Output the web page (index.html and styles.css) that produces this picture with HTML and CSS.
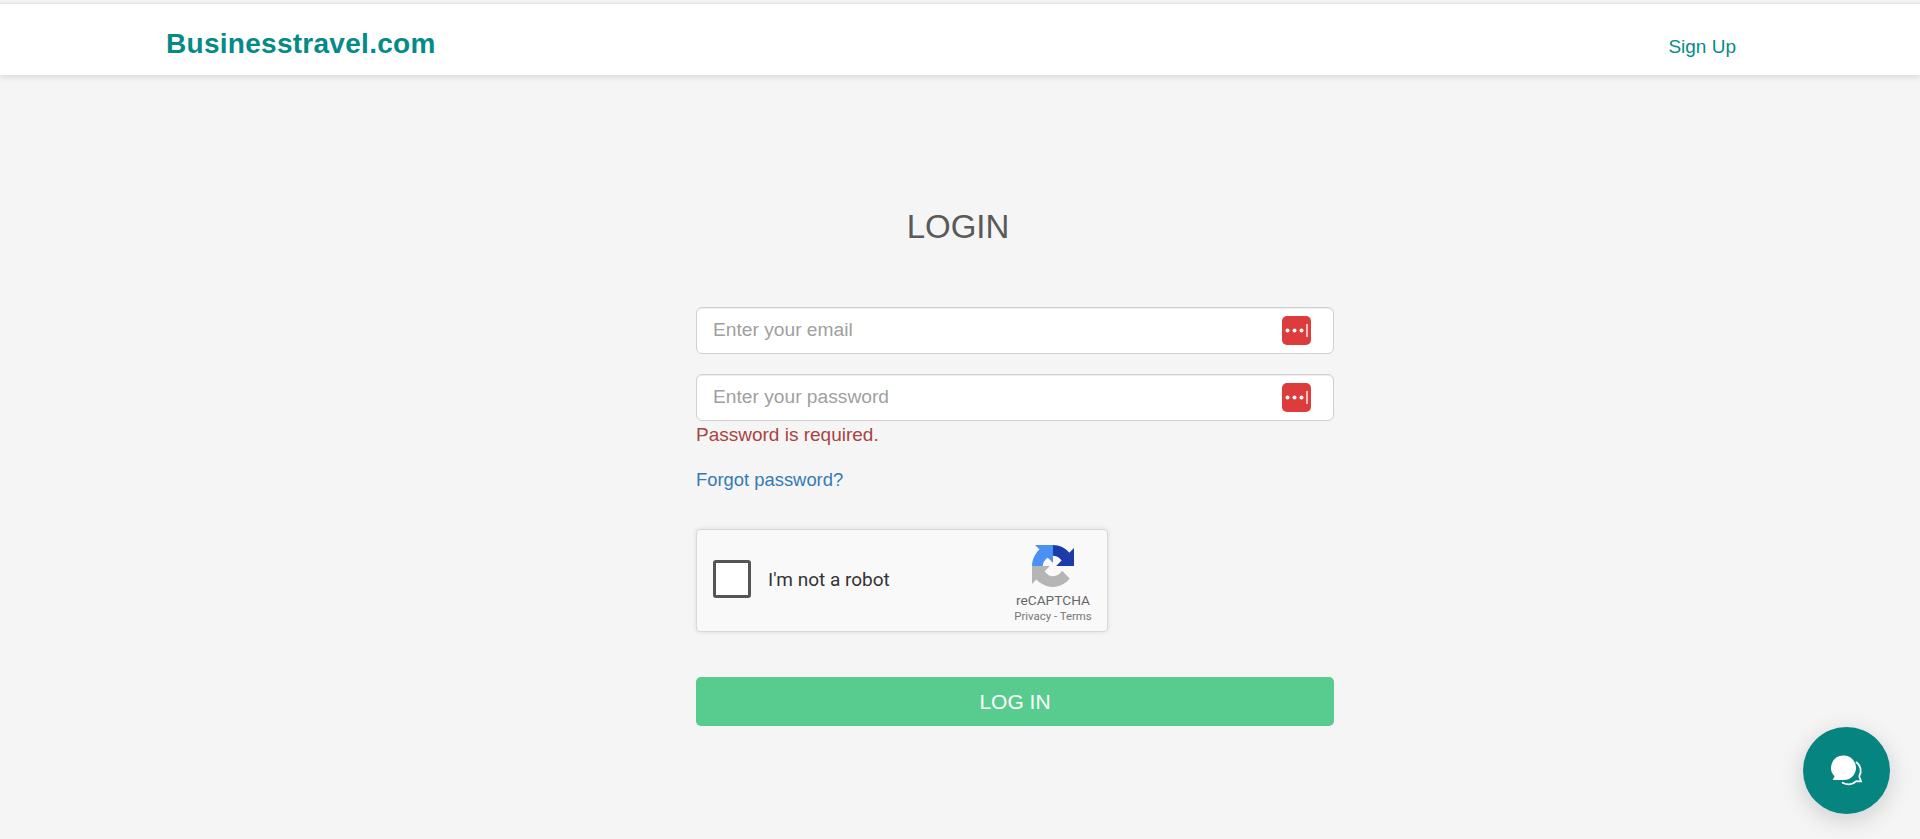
FILE: index.html
```html
<!DOCTYPE html>
<html lang="en">
<head>
<meta charset="utf-8">
<title>Login - Businesstravel.com</title>
<link rel="stylesheet" href="styles.css">
</head>
<body>
<header class="topbar">
  <a class="brand" href="#">Businesstravel.com</a>
  <a class="signup" href="#">Sign Up</a>
</header>
<main class="main">
  <h1 class="title">LOGIN</h1>
  <form class="form">
    <div class="field">
      <input class="input" type="text" placeholder="Enter your email">
      <svg class="pm" viewBox="0 0 29 29"><rect width="29" height="29" rx="5" fill="#dc3c3c"/><circle cx="5.500" cy="14.500" r="2" fill="#fff"/><circle cx="12.500" cy="14.500" r="2" fill="#fff"/><circle cx="19.500" cy="14.500" r="2" fill="#fff"/><rect x="24" y="8" width="2" height="13" fill="#f2b8b8"/></svg>
    </div>
    <div class="field field-second">
      <input class="input" type="password" placeholder="Enter your password">
      <svg class="pm" viewBox="0 0 29 29"><rect width="29" height="29" rx="5" fill="#dc3c3c"/><circle cx="5.500" cy="14.500" r="2" fill="#fff"/><circle cx="12.500" cy="14.500" r="2" fill="#fff"/><circle cx="19.500" cy="14.500" r="2" fill="#fff"/><rect x="24" y="8" width="2" height="13" fill="#f2b8b8"/></svg>
    </div>
    <div class="error">Password is required.</div>
    <a class="forgot" href="#">Forgot password?</a>
    <div class="captcha">
      <span class="check"></span>
      <span class="robot">I'm not a robot</span>
      <div class="badge">
        <svg class="rc" viewBox="0 0 64 64">
          <path d="M64 31.955l-.033-1.37V4.687l-7.16 7.16C50.948 4.674 42.033.093 32.05.093 21.663.093 12.437 5.05 6.570 12.730l11.736 11.860a15.540 15.540 0 0 1 4.753-5.334c2.050-1.600 4.952-2.906 8.990-2.906.488 0 .865.057 1.142.164 5.005.395 9.344 3.158 11.900 7.168l-8.307 8.307 26.200-.004" fill="#1c3aa9"/>
          <path d="M31.955 0l-1.370.033H4.687l7.160 7.160C4.674 13.052.093 21.967.093 31.950c0 10.387 4.957 19.613 12.637 25.480l11.860-11.736a15.540 15.540 0 0 1-5.334-4.753c-1.600-2.050-2.906-4.952-2.906-8.990 0-.488.057-.865.164-1.142.395-5.005 3.158-9.344 7.168-11.900l8.307 8.307-.004-26.200" fill="#4a90f5"/>
          <path d="M.002 32l.033 1.370v25.898l7.160-7.160C13.054 59.280 21.970 63.860 31.950 63.860c10.387 0 19.613-4.957 25.480-12.637l-11.736-11.860a15.540 15.540 0 0 1-4.753 5.334c-2.050 1.600-4.952 2.906-8.990 2.906-.488 0-.865-.057-1.142-.164-5.005-.395-9.344-3.158-11.900-7.168l8.307-8.307-26.200.004" fill="#b5b5b5"/>
        </svg>
        <div class="rc-name">reCAPTCHA</div>
        <div class="rc-links">Privacy - Terms</div>
      </div>
    </div>
    <button class="submit" type="button">LOG IN</button>
  </form>
</main>
<button class="chat" type="button" aria-label="Chat">
  <svg viewBox="0 0 32 32" width="34" height="34">
    <path d="M13 1.500a11.500 11.500 0 0 1 0 23H2.500l1.800-3.500A11.500 11.500 0 0 1 13 1.500z" fill="#fff"/>
    <path d="M24.500 7.500A10 10 0 0 1 27.500 21l1.700 4.700-4.500-.200a11 11 0 0 1-10.500 2.500l-3-1.200" fill="none" stroke="#fff" stroke-width="1.600"/>
  </svg>
</button>
</body>
</html>
```
FILE: styles.css
```css
* { box-sizing: border-box; }
html, body { height: 100%; }
body {
  margin: 0;
  padding-top: 3px;
  background: #f5f5f5;
  font-family: "Liberation Sans", Arial, sans-serif;
  overflow: hidden;
}
.topbar {
  height: 72px;
  padding: 8px 184px 0 166px;
  background: #fff;
  border-top: 1px solid #e2e2e2;
  display: flex;
  align-items: center;
  justify-content: space-between;
  box-shadow: 0 2px 6px rgba(0,0,0,.12);
}
.brand {
  font-size: 28px;
  font-weight: 700;
  letter-spacing: .28px;
  color: #058b87;
  text-decoration: none;
}
.signup {
  margin-top: 6px;
  font-size: 19px;
  color: #058b87;
  text-decoration: none;
}
.main {
  width: 1140px;
  margin-left: 388px;
}
.title {
  margin: 132px 0 0;
  font-size: 33px;
  font-weight: 400;
  line-height: 40px;
  color: #5a5a5a;
  text-align: center;
}
.form {
  width: 638px;
  margin: 60px 0 0 308px;
}
.field { position: relative; }
.field-second { margin-top: 20px; }
.input {
  display: block;
  width: 100%;
  height: 47px;
  padding: 0 60px 1px 16px;
  border: 1px solid #d0d0d0;
  border-radius: 6px;
  background: #fff;
  font: 19.200px "Liberation Sans", Arial, sans-serif;
  color: #555;
  box-shadow: inset 0 1px 1px rgba(0,0,0,.075);
}
.input::placeholder { color: #a0a0a0; opacity: 1; }
.pm {
  position: absolute;
  top: 9px;
  right: 23px;
  width: 29px;
  height: 29px;
}
.error {
  margin-top: 1px;
  font-size: 19px;
  line-height: 26px;
  color: #a94442;
}
.forgot {
  display: block;
  margin-top: 19px;
  font-size: 18.400px;
  line-height: 26px;
  color: #337ab7;
  text-decoration: none;
}
.captcha {
  width: 412px;
  height: 103px;
  margin-top: 36px;
  padding: 0 0 3px 16px;
  display: flex;
  align-items: center;
  background: #f9f9f9;
  border: 1px solid #d8d8d8;
  border-radius: 4px;
  box-shadow: 0 0 5px rgba(0,0,0,.1);
}
.check {
  width: 38px;
  height: 38px;
  flex: none;
  background: #fff;
  border: 3px solid #555;
  border-radius: 3px;
}
.robot {
  margin-left: 17px;
  font: 19px Roboto, "Liberation Sans", sans-serif;
  color: #333;
}
.badge {
  align-self: flex-start;
  margin: 15px 9px 0 auto;
  width: 90px;
  text-align: center;
  color: #666;
  font-family: Roboto, "Liberation Sans", sans-serif;
}
.rc { display: block; width: 42px; height: 42px; margin: 0 auto; }
.rc-name { margin-top: 5px; font-size: 13.700px; line-height: 16px; color: #666; }
.rc-links { margin-top: 1px; font-size: 11.400px; line-height: 14px; color: #777; }
.submit {
  display: block;
  width: 100%;
  height: 49px;
  margin-top: 45px;
  border: 0;
  border-radius: 5px;
  background: #58cc8f;
  color: #fff;
  font: 21px "Liberation Sans", Arial, sans-serif;
}
.chat {
  position: fixed;
  right: 30px;
  bottom: 25px;
  width: 87px;
  height: 87px;
  padding: 0;
  border: 0;
  border-radius: 50%;
  background: #068580;
  display: flex;
  align-items: center;
  justify-content: center;
  box-shadow: 0 6px 24px rgba(0,0,0,.16);
}
```
